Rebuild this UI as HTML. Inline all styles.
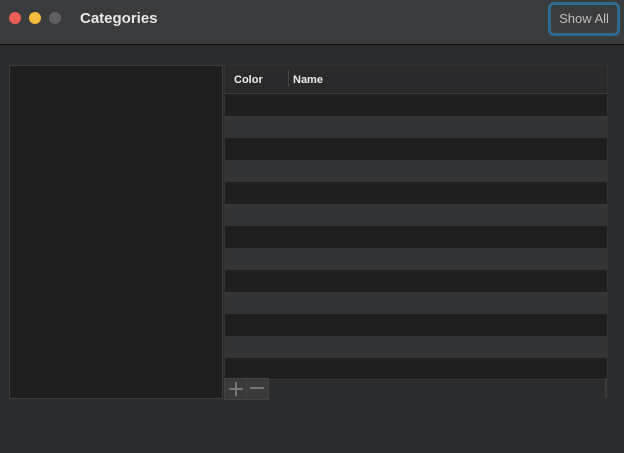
<!DOCTYPE html>
<html><head><style>
body{margin:0;width:624px;height:453px;background:#2b2c2e;font-family:"Liberation Sans",sans-serif;position:relative;overflow:hidden}
.tb{position:absolute;left:0;top:0;width:624px;height:44px;background:#3a3b3d;border-bottom:1px solid #0a0a0a}
.dot{position:absolute;top:12px;width:12px;height:12px;border-radius:50%}
.title{position:absolute;left:80px;top:10px;color:#e6e6e6;font-weight:bold;font-size:15px}
.sa{position:absolute;left:548px;top:2px;width:66px;height:28px;border:3px solid #2f6a94;border-radius:6px;color:#bdbdbd;font-size:13px;line-height:28px;text-align:center}
.left{position:absolute;left:9px;top:65px;width:212px;height:332px;background:#1e1e1e;border:1px solid #3a3a3a}
.tbl{position:absolute;left:224px;top:65px;width:382px;height:313px;background:#1f1f1f;border:1px solid #333}
.hdr{height:27px;background:#2a2a2c;border-bottom:1px solid #3a3a3a;color:#ececec;font-size:11px;font-weight:bold;position:relative}
.row{height:22px}
.row:nth-child(even){background:#333436}
.btn{position:absolute;top:378px;width:21px;height:20px;background:#3a3a3c;border:1px solid #444}
</style></head><body>
<div class="tb">
<div class="dot" style="left:9px;background:#ee5e57"></div>
<div class="dot" style="left:29px;background:#f5bd3c"></div>
<div class="dot" style="left:49px;background:#5f5f61"></div>
<div class="title">Categories</div>
<div class="sa">Show All</div>
</div>
<div class="left"></div>
<div class="tbl">
<div class="hdr"><span style="position:absolute;left:9px;top:8px">Color</span><span style="position:absolute;left:63px;top:4px;width:1px;height:17px;background:#444"></span><span style="position:absolute;left:68px;top:8px">Name</span></div>
<div>
<div class="row"></div><div class="row"></div><div class="row"></div><div class="row"></div><div class="row"></div><div class="row"></div><div class="row"></div><div class="row"></div><div class="row"></div><div class="row"></div><div class="row"></div><div class="row"></div><div class="row"></div>
</div></div>
<div style="position:absolute;left:605px;top:378px;width:2px;height:20px;background:#3a3a3a"></div>
<div class="btn" style="left:224px"><div style="position:absolute;left:4px;top:9px;width:14px;height:2px;background:#777"></div><div style="position:absolute;left:10px;top:3px;width:2px;height:14px;background:#777"></div></div>
<div class="btn" style="left:246px"><div style="position:absolute;left:3px;top:8px;width:14px;height:2px;background:#777"></div></div>
</body></html>
